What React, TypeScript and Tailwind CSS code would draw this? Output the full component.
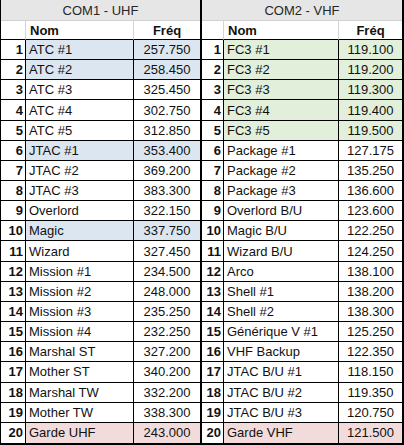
type Row = { name: string; freq: string; tint?: "blue" | "green" | "pink" };

const uhf: Row[] = [
  { name: "ATC #1", freq: "257.750", tint: "blue" },
  { name: "ATC #2", freq: "258.450", tint: "blue" },
  { name: "ATC #3", freq: "325.450" },
  { name: "ATC #4", freq: "302.750" },
  { name: "ATC #5", freq: "312.850" },
  { name: "JTAC #1", freq: "353.400", tint: "blue" },
  { name: "JTAC #2", freq: "369.200" },
  { name: "JTAC #3", freq: "383.300" },
  { name: "Overlord", freq: "322.150" },
  { name: "Magic", freq: "337.750", tint: "blue" },
  { name: "Wizard", freq: "327.450" },
  { name: "Mission #1", freq: "234.500" },
  { name: "Mission #2", freq: "248.000" },
  { name: "Mission #3", freq: "235.250" },
  { name: "Mission #4", freq: "232.250" },
  { name: "Marshal ST", freq: "327.200" },
  { name: "Mother ST", freq: "340.200" },
  { name: "Marshal TW", freq: "332.200" },
  { name: "Mother TW", freq: "338.300" },
  { name: "Garde UHF", freq: "243.000", tint: "pink" },
];

const vhf: Row[] = [
  { name: "FC3 #1", freq: "119.100", tint: "green" },
  { name: "FC3 #2", freq: "119.200", tint: "green" },
  { name: "FC3 #3", freq: "119.300", tint: "green" },
  { name: "FC3 #4", freq: "119.400", tint: "green" },
  { name: "FC3 #5", freq: "119.500", tint: "green" },
  { name: "Package #1", freq: "127.175" },
  { name: "Package #2", freq: "135.250" },
  { name: "Package #3", freq: "136.600" },
  { name: "Overlord B/U", freq: "123.600" },
  { name: "Magic B/U", freq: "122.250" },
  { name: "Wizard B/U", freq: "124.250" },
  { name: "Arco", freq: "138.100" },
  { name: "Shell #1", freq: "138.200" },
  { name: "Shell #2", freq: "138.300" },
  { name: "Générique V #1", freq: "125.250" },
  { name: "VHF Backup", freq: "122.350" },
  { name: "JTAC B/U #1", freq: "118.150" },
  { name: "JTAC B/U #2", freq: "119.350" },
  { name: "JTAC B/U #3", freq: "120.750" },
  { name: "Garde VHF", freq: "121.500", tint: "pink" },
];

const tints = {
  blue: "bg-[#dce6f1]",
  green: "bg-[#e2efda]",
  pink: "bg-[#f2dcdb]",
};

const Table = ({ title, rows, cols, outer }: { title: string; rows: Row[]; cols: string; outer: string }) => {
  return (
    <div className={`grid h-[445px] grid-rows-[21px_19px_repeat(20,minmax(0,1fr))] border-b-2 border-r-2 border-black ${cols} ${outer}`}>
      <div className="col-span-3 flex items-center justify-center border-b border-[#d0d0d0] bg-[#e6e6e6] text-[#262626]">
        {title}
      </div>
      <div className="border-b border-r border-b-black border-r-[#d4d4d4]" />
      <div className="flex items-center border-b border-r border-b-black border-r-[#d4d4d4] pl-[4px] font-bold">Nom</div>
      <div className="flex items-center justify-center border-b border-black font-bold">Fréq</div>
      {rows.map((row, i) => {
        const last = i === rows.length - 1;
        const line = last ? "" : "border-b";
        const bg = row.tint ? tints[row.tint] : "";
        return (
          <div key={i} className="contents">
            <div className={`flex items-center justify-end border-r border-black pr-[2px] font-bold ${line}`}>{i + 1}</div>
            <div className={`flex items-center border-r border-black pl-[3px] whitespace-nowrap ${line} ${bg}`}>{row.name}</div>
            <div className={`flex items-center justify-center border-black ${line} ${bg}`}>{row.freq}</div>
          </div>
        );
      })}
    </div>
  );
};

export default function App() {
  return (
    <div className="flex h-[445px] w-[404px] bg-white font-['Liberation_Sans',Arial,sans-serif] text-[13px] leading-none text-[#111]">
      <Table title="COM1 - UHF" rows={uhf} cols="grid-cols-[25px_108px_66px]" outer="w-[202px] border-l" />
      <Table title="COM2 - VHF" rows={vhf} cols="grid-cols-[22px_115px_63px]" outer="w-[202px]" />
    </div>
  );
}
